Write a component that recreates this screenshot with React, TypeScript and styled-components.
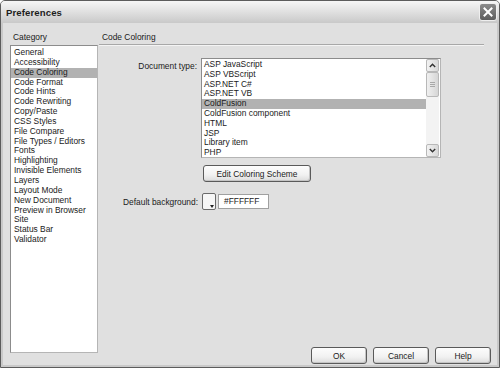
import React from 'react';
import styled, { createGlobalStyle } from 'styled-components';

const Global = createGlobalStyle`
  html, body { margin: 0; padding: 0; background: #ffffff; }
  body { font-family: "Liberation Sans", Arial, sans-serif; color: #1a1a1a; }
  * { box-sizing: border-box; }
`;

const Window = styled.div`
  width: 500px;
  height: 368px;
  display: flex;
  flex-direction: column;
  background: #e0e0e0;
  border: 1px solid #5c5c5c;
  border-radius: 5px 5px 0 0;
  box-shadow: inset 0 0 0 2px #c9c9c9;
  overflow: hidden;
`;

const TitleBar = styled.div`
  height: 22px;
  flex: none;
  display: flex;
  align-items: center;
  justify-content: space-between;
  padding: 0 2px 0 5px;
  background: linear-gradient(to bottom, #f6f6f6 0%, #e2e2e2 45%, #c9c9c9 100%);
`;

const Title = styled.div`
  font-size: 9.6px;
  font-weight: bold;
  color: #1e1e1e;
  letter-spacing: 0.1px;
`;

const CloseButton = styled.div`
  width: 18px;
  height: 18px;
  border-radius: 3px;
  border: 1px solid #eeeeee;
  background: linear-gradient(to bottom, #8a8a8a, #5e5e5e);
  display: flex;
  align-items: center;
  justify-content: center;
`;

const Body = styled.div`
  flex: 1;
  display: flex;
  padding: 9px 8px 3px 9px;
  min-height: 0;
`;

const LeftColumn = styled.div`
  width: 88px;
  display: flex;
  flex-direction: column;
  padding-bottom: 11px;
`;

const SmallLabel = styled.div<{ $indent?: number }>`
  font-size: 8.4px;
  line-height: 10px;
  height: 10px;
  padding-left: ${(p) => p.$indent ?? 0}px;
  margin-bottom: 3px;
  white-space: nowrap;
`;

const CategoryList = styled.div`
  flex: 1;
  background: #ffffff;
  border: 1px solid #8c8c8c;
  border-right-color: #b5b5b5;
  border-bottom-color: #b5b5b5;
  padding-top: 2px;
`;

const ListItem = styled.div<{ $selected?: boolean }>`
  font-size: 8.4px;
  line-height: 9.85px;
  height: 9.85px;
  padding-left: 3px;
  white-space: nowrap;
  background: ${(p) => (p.$selected ? '#b2b2b2' : 'transparent')};
`;

const RightColumn = styled.div`
  flex: 1;
  display: flex;
  flex-direction: column;
  margin-left: 1px;
`;

const SectionTitle = styled.div`
  font-size: 8.4px;
  line-height: 10px;
  height: 10px;
  padding-left: 3px;
  margin-bottom: 2px;
`;

const Rule = styled.div`
  height: 2px;
  border-top: 1px solid #a8a8a8;
  border-bottom: 1px solid #f4f4f4;
  margin-right: 7px;
`;

const FormRow = styled.div<{ $top: number; $align?: string }>`
  display: flex;
  align-items: ${(p) => p.$align ?? 'flex-start'};
  margin-top: ${(p) => p.$top}px;
`;

const FieldLabel = styled.div<{ $width: number; $pad?: number }>`
  width: ${(p) => p.$width}px;
  text-align: right;
  font-size: 8.4px;
  line-height: 10px;
  padding-top: ${(p) => p.$pad ?? 0}px;
  margin-right: 4px;
  white-space: nowrap;
`;

const ListBox = styled.div`
  width: 240px;
  height: 100px;
  background: #ffffff;
  border: 1px solid #8c8c8c;
  border-right-color: #b5b5b5;
  border-bottom-color: #b5b5b5;
  display: flex;
`;

const ListBoxItems = styled.div`
  flex: 1;
  padding-top: 1px;
`;

const ListBoxItem = styled.div<{ $selected?: boolean }>`
  font-size: 8.4px;
  line-height: 9.8px;
  height: 9.8px;
  padding-left: 2px;
  white-space: nowrap;
  background: ${(p) => (p.$selected ? '#b2b2b2' : 'transparent')};
`;

const ScrollBar = styled.div`
  width: 13px;
  margin: 0 1px 0 0;
  display: flex;
  flex-direction: column;
  background: #f3f3f3;
`;

const ScrollButton = styled.div`
  height: 13px;
  border: 1px solid #b8b8b8;
  border-radius: 2px;
  background: linear-gradient(to right, #f2f2f2, #d8d8d8);
  display: flex;
  align-items: center;
  justify-content: center;
`;

const ScrollThumb = styled.div`
  height: 25px;
  border: 1px solid #b8b8b8;
  border-radius: 2px;
  background: linear-gradient(to right, #f0f0f0, #d6d6d6);
  display: flex;
  align-items: center;
  justify-content: center;
`;

const ScrollTrack = styled.div`
  flex: 1;
`;

const Grip = styled.div`
  width: 5px;
  height: 5px;
  border-top: 1px solid #a8a8a8;
  border-bottom: 1px solid #a8a8a8;
  position: relative;
  &::after {
    content: '';
    position: absolute;
    left: 0;
    right: 0;
    top: 1px;
    border-top: 1px solid #a8a8a8;
  }
`;

const PushButton = styled.button<{ $width: number }>`
  width: ${(p) => p.$width}px;
  height: 17px;
  padding: 0;
  font-family: "Liberation Sans", Arial, sans-serif;
  font-size: 8.4px;
  color: #1a1a1a;
  border: 1px solid #5a5a5a;
  border-radius: 3px;
  background: linear-gradient(to bottom, #fdfdfd 0%, #f1f1f1 60%, #dcdcdc 100%);
  box-shadow: inset -1px -1px 0 #c4c4c4;
`;

const Spacer = styled.div<{ $width: number }>`
  width: ${(p) => p.$width}px;
  flex: none;
`;

const Swatch = styled.div`
  width: 14px;
  height: 17px;
  border: 1px solid #6a6a6a;
  border-radius: 2px;
  background: #f6f6f6;
  position: relative;
  margin-right: 2px;
`;

const SwatchArrow = styled.div`
  position: absolute;
  right: 1px;
  bottom: 1px;
  width: 0;
  height: 0;
  border-left: 2px solid transparent;
  border-right: 2px solid transparent;
  border-top: 3px solid #222;
`;

const TextInput = styled.div`
  width: 51px;
  height: 15px;
  background: #ffffff;
  border: 1px solid #a0a0a0;
  font-size: 8.4px;
  line-height: 13px;
  padding-left: 5px;
`;

const Footer = styled.div`
  margin-top: auto;
  display: flex;
  justify-content: flex-end;
  gap: 6px;
  padding-right: 0px;
`;

const categories = [
  'General',
  'Accessibility',
  'Code Coloring',
  'Code Format',
  'Code Hints',
  'Code Rewriting',
  'Copy/Paste',
  'CSS Styles',
  'File Compare',
  'File Types / Editors',
  'Fonts',
  'Highlighting',
  'Invisible Elements',
  'Layers',
  'Layout Mode',
  'New Document',
  'Preview in Browser',
  'Site',
  'Status Bar',
  'Validator',
];

const docTypes = [
  'ASP JavaScript',
  'ASP VBScript',
  'ASP.NET C#',
  'ASP.NET VB',
  'ColdFusion',
  'ColdFusion component',
  'HTML',
  'JSP',
  'Library item',
  'PHP',
];

const Chevron = ({ up }: { up?: boolean }) => (
  <svg width="7" height="5" viewBox="0 0 7 5">
    <path
      d={up ? 'M0.8 4 L3.5 1.3 L6.2 4' : 'M0.8 1 L3.5 3.7 L6.2 1'}
      fill="none"
      stroke="#333"
      strokeWidth="1.4"
    />
  </svg>
);

export default function App() {
  return (
    <>
      <Global />
      <Window>
        <TitleBar>
          <Title>Preferences</Title>
          <CloseButton>
            <svg width="10" height="10" viewBox="0 0 10 10">
              <path d="M1.5 1.5 L8.5 8.5 M8.5 1.5 L1.5 8.5" stroke="#ffffff" strokeWidth="2" strokeLinecap="square" />
            </svg>
          </CloseButton>
        </TitleBar>
        <Body>
          <LeftColumn>
            <SmallLabel $indent={3}>Category</SmallLabel>
            <CategoryList>
              {categories.map((c) => (
                <ListItem key={c} $selected={c === 'Code Coloring'}>
                  {c}
                </ListItem>
              ))}
            </CategoryList>
          </LeftColumn>
          <RightColumn>
            <SectionTitle>Code Coloring</SectionTitle>
            <Rule />
            <FormRow $top={12}>
              <FieldLabel $width={98} $pad={3}>Document type:</FieldLabel>
              <ListBox>
                <ListBoxItems>
                  {docTypes.map((d) => (
                    <ListBoxItem key={d} $selected={d === 'ColdFusion'}>
                      {d}
                    </ListBoxItem>
                  ))}
                </ListBoxItems>
                <ScrollBar>
                  <ScrollButton>
                    <Chevron up />
                  </ScrollButton>
                  <ScrollThumb>
                    <Grip />
                  </ScrollThumb>
                  <ScrollTrack />
                  <ScrollButton>
                    <Chevron />
                  </ScrollButton>
                </ScrollBar>
              </ListBox>
            </FormRow>
            <FormRow $top={7}>
              <Spacer $width={104} />
              <PushButton $width={108}>Edit Coloring Scheme</PushButton>
            </FormRow>
            <FormRow $top={11} $align="center">
              <FieldLabel $width={99}>Default background:</FieldLabel>
              <Swatch>
                <SwatchArrow />
              </Swatch>
              <TextInput>#FFFFFF</TextInput>
            </FormRow>
            <Footer>
              <PushButton $width={56}>OK</PushButton>
              <PushButton $width={56}>Cancel</PushButton>
              <PushButton $width={56}>Help</PushButton>
            </Footer>
          </RightColumn>
        </Body>
      </Window>
    </>
  );
}
